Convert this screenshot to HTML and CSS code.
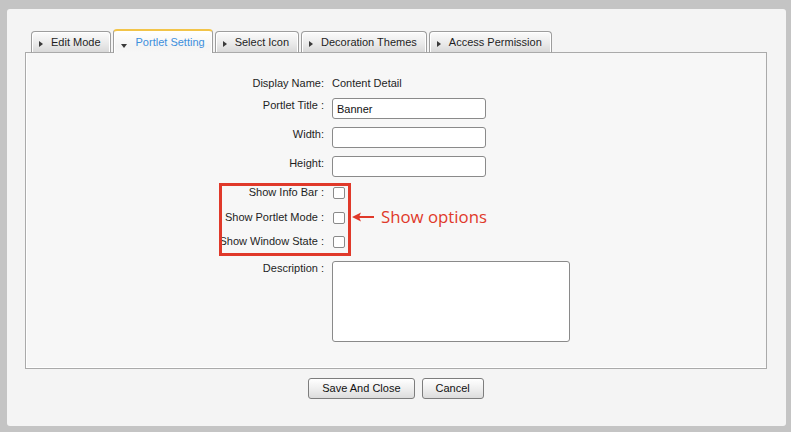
FILE: index.html
```html
<!DOCTYPE html>
<html>
<head>
<meta charset="utf-8">
<link rel="stylesheet" href="styles.css">
</head>
<body>
<div class="panel">
  <div class="tabs">
    <div class="tab"><span class="tri-right"></span>Edit Mode</div>
    <div class="tab active"><span class="tri-down"></span>Portlet Setting</div>
    <div class="tab"><span class="tri-right"></span>Select Icon</div>
    <div class="tab"><span class="tri-right"></span>Decoration Themes</div>
    <div class="tab"><span class="tri-right"></span>Access Permission</div>
  </div>
  <div class="content">
    <div class="form">
      <div class="row first"><div class="label">Display Name:</div><div class="field">Content Detail</div></div>
      <div class="row"><div class="label">Portlet Title :</div><div class="field"><input class="text" type="text" value="Banner"></div></div>
      <div class="row"><div class="label">Width:</div><div class="field"><input class="text" type="text"></div></div>
      <div class="row"><div class="label">Height:</div><div class="field"><input class="text" type="text"></div></div>
      <div class="row check first-check"><div class="label">Show Info Bar :</div><div class="field"><input class="cb" type="checkbox"></div></div>
      <div class="row check"><div class="label">Show Portlet Mode :</div><div class="field"><input class="cb" type="checkbox"></div></div>
      <div class="row check"><div class="label">Show Window State :</div><div class="field"><input class="cb" type="checkbox"></div></div>
      <div class="row desc"><div class="label">Description :</div><div class="field"><textarea class="area"></textarea></div></div>
    </div>
    <div class="callout-box"></div>
    <div class="callout">
      <svg class="arrow" width="23" height="10" viewBox="0 0 23 10"><path d="M0 5 L9 0.5 L7.5 4 L22 4 L22 6 L7.5 6 L9 9.5 Z" fill="#e0392a"/></svg>
      <span class="callout-text">Show options</span>
    </div>
  </div>
  <div class="actions">
    <button class="btn">Save And Close</button>
    <button class="btn">Cancel</button>
  </div>
</div>
</body>
</html>
```
FILE: styles.css
```css
html, body {
  margin: 0;
  padding: 0;
  background: #c4c4c4;
  font-family: "Liberation Sans", Arial, sans-serif;
  font-size: 11px;
  color: #1e1e1e;
}
.panel {
  margin: 9px 5px 0 7px;
  height: 417px;
  box-sizing: border-box;
  background: #f4f4f4;
  border-radius: 3px;
  padding: 20px 19px 0 18px;
}
.tabs {
  display: flex;
  align-items: flex-end;
  gap: 2px;
  margin-left: 6px;
  margin-bottom: -1px;
  position: relative;
  z-index: 1;
}
.tab {
  height: 22px;
  box-sizing: border-box;
  padding: 3px 9px 0 7px;
  line-height: 14px;
  border: 1px solid #9d9d9d;
  border-bottom-color: #aaaaaa;
  border-radius: 4px 4px 0 0;
  background: linear-gradient(#fbfbfb, #e9e9e9 60%, #d9d9d9);
  box-shadow: inset 1px 1px 0 #ffffff, inset -1px 0 0 #ffffff;
  color: #1e1e1e;
  white-space: nowrap;
}
.tab.first-tab { padding-right: 8px; }
.tab.active {
  height: 24px;
  padding-top: 4px;
  padding-right: 7px;
  border-top: 2px solid #f2c449;
  border-bottom: none;
  background: linear-gradient(#ffffff, #f4f4f4 70%, #f7f7f7);
  color: #3d8fdc;
}
.tri-right {
  display: inline-block;
  width: 0;
  height: 0;
  border-left: 4px solid #3a3a3a;
  border-top: 3.5px solid transparent;
  border-bottom: 3.5px solid transparent;
  margin-right: 8px;
  vertical-align: -1px;
}
.tri-down {
  display: inline-block;
  width: 0;
  height: 0;
  border-top: 4px solid #3a3a3a;
  border-left: 3.5px solid transparent;
  border-right: 3.5px solid transparent;
  margin-right: 9px;
  vertical-align: -2px;
}
.content {
  position: relative;
  background: #f7f7f7;
  border: 1px solid #aaaaaa;
  box-shadow: inset 1px 0 0 #ffffff, inset 0 -1px 0 #ffffff;
  height: 317px;
  box-sizing: border-box;
  padding-top: 23px;
}
.row {
  display: flex;
  margin-top: 8px;
  line-height: 14px;
}
.row.first { margin-top: 0; }
.row.check { margin-top: 10.5px; height: 14px; }
.row.first-check { margin-top: 8px; }
.row.desc { margin-top: 13px; }
.label {
  width: 298px;
  text-align: right;
  flex: none;
}
.field {
  margin-left: 8px;
}
.text {
  display: block;
  width: 154px;
  height: 21px;
  box-sizing: border-box;
  margin: 0;
  border: 1px solid #8a8a8a;
  border-radius: 3px;
  background: #fff;
  padding: 0 4px;
  font-family: "Liberation Sans", Arial, sans-serif;
  font-size: 11px;
  color: #111;
  outline: none;
}
.cb {
  appearance: none;
  -webkit-appearance: none;
  display: block;
  width: 12px;
  height: 12px;
  box-sizing: border-box;
  margin: 2px 0 0 1px;
  border: 1px solid #8a8a8a;
  border-radius: 2px;
  background: #fff;
}
.area {
  display: block;
  width: 238px;
  height: 81px;
  box-sizing: border-box;
  margin: 0;
  border: 1px solid #8a8a8a;
  border-radius: 3px;
  background: #fff;
  resize: none;
  outline: none;
}
.callout-box {
  position: absolute;
  left: 193px;
  top: 130px;
  width: 132px;
  height: 73px;
  box-sizing: border-box;
  border: 3px solid #e0392a;
}
.callout {
  position: absolute;
  left: 326px;
  top: 153px;
  display: flex;
  align-items: center;
  gap: 6px;
}
.arrow { display: block; }
.callout-text {
  font-family: "Open Sans", "DejaVu Sans", sans-serif;
  font-size: 16.8px;
  color: #e0392a;
  line-height: 22px;
}
.actions {
  display: flex;
  justify-content: center;
  gap: 7px;
  margin-top: 9px;
}
.btn {
  height: 21px;
  box-sizing: border-box;
  padding: 0 13px;
  margin: 0;
  border: 1px solid #7d7d7d;
  border-radius: 3px;
  background: linear-gradient(#ffffff, #efefef 50%, #dcdcdc);
  font-family: "Liberation Sans", Arial, sans-serif;
  font-size: 11px;
  color: #111;
  line-height: 19px;
}
```
